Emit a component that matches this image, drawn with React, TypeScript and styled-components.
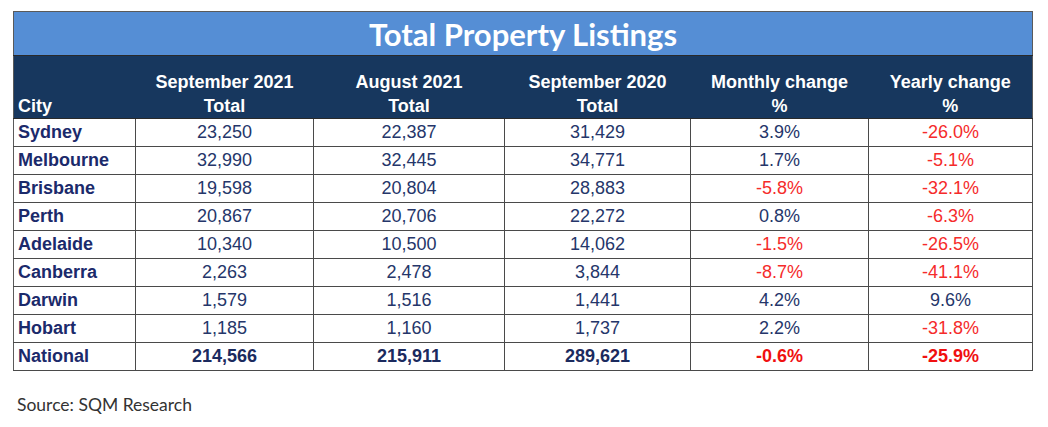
import React from "react";
import styled, { createGlobalStyle } from "styled-components";

const GlobalStyle = createGlobalStyle`
  body {
    margin: 0;
    background: #ffffff;
    font-family: "Liberation Sans", Arial, sans-serif;
  }
`;

const Page = styled.div`
  display: flex;
  flex-direction: column;
  align-items: flex-start;
  padding: 11px 0 0 13px;
  width: 1048px;
  height: 427px;
  box-sizing: border-box;
`;

const Table = styled.table`
  width: 1019px;
  border-collapse: collapse;
  table-layout: fixed;
  border: 1px solid #5a5a5a;
`;

const TitleCell = styled.th`
  height: 43px;
  padding: 0;
  background: #558ed5;
  color: #ffffff;
  font-family: Lato, "Open Sans", sans-serif;
  font-weight: 700;
  font-size: 31px;
  line-height: 40px;
  text-align: center;
  vertical-align: middle;
  border-bottom: 1px solid #2a2a2a;
`;

const HeadCell = styled.th<{ $left?: boolean }>`
  height: 62px;
  padding: 0 0 0 ${({ $left }) => ($left ? "4px" : "0")};
  background: #17375e;
  color: #ffffff;
  font-size: 18px;
  font-weight: 700;
  line-height: 24px;
  text-align: ${({ $left }) => ($left ? "left" : "center")};
  vertical-align: bottom;
  border-bottom: 1px solid #2a2a2a;
`;

const Row = styled.tr`
  height: 28px;
`;

const CityCell = styled.td`
  padding: 0 0 0 4px;
  color: #1b2a6b;
  font-size: 18px;
  font-weight: 700;
  border: 1px solid #4a4a4a;
  border-left: 1px solid #5a5a5a;
`;

const NumCell = styled.td<{ $neg?: boolean; $bold?: boolean }>`
  padding: 0;
  text-align: center;
  font-size: 18px;
  font-weight: ${({ $bold }) => ($bold ? 700 : 400)};
  color: ${({ $neg, $bold }) =>
    $neg ? ($bold ? "#f01010" : "#f52b2b") : $bold ? "#1b2a5e" : "#25366a"};
  border: 1px solid #4a4a4a;
`;

const Source = styled.div`
  margin: 23px 0 0 4px;
  font-family: Lato, "Open Sans", sans-serif;
  font-size: 17.5px;
  color: #333333;
`;

type Listing = {
  city: string;
  sep21: string;
  aug21: string;
  sep20: string;
  monthly: string;
  yearly: string;
};

const rows: Listing[] = [
  { city: "Sydney", sep21: "23,250", aug21: "22,387", sep20: "31,429", monthly: "3.9%", yearly: "-26.0%" },
  { city: "Melbourne", sep21: "32,990", aug21: "32,445", sep20: "34,771", monthly: "1.7%", yearly: "-5.1%" },
  { city: "Brisbane", sep21: "19,598", aug21: "20,804", sep20: "28,883", monthly: "-5.8%", yearly: "-32.1%" },
  { city: "Perth", sep21: "20,867", aug21: "20,706", sep20: "22,272", monthly: "0.8%", yearly: "-6.3%" },
  { city: "Adelaide", sep21: "10,340", aug21: "10,500", sep20: "14,062", monthly: "-1.5%", yearly: "-26.5%" },
  { city: "Canberra", sep21: "2,263", aug21: "2,478", sep20: "3,844", monthly: "-8.7%", yearly: "-41.1%" },
  { city: "Darwin", sep21: "1,579", aug21: "1,516", sep20: "1,441", monthly: "4.2%", yearly: "9.6%" },
  { city: "Hobart", sep21: "1,185", aug21: "1,160", sep20: "1,737", monthly: "2.2%", yearly: "-31.8%" },
];

const national: Listing = {
  city: "National",
  sep21: "214,566",
  aug21: "215,911",
  sep20: "289,621",
  monthly: "-0.6%",
  yearly: "-25.9%",
};

const isNeg = (v: string) => v.startsWith("-");

function ListingRow({ row, bold }: { row: Listing; bold?: boolean }) {
  return (
    <Row>
      <CityCell>{row.city}</CityCell>
      <NumCell $bold={bold}>{row.sep21}</NumCell>
      <NumCell $bold={bold}>{row.aug21}</NumCell>
      <NumCell $bold={bold}>{row.sep20}</NumCell>
      <NumCell $bold={bold} $neg={isNeg(row.monthly)}>
        {row.monthly}
      </NumCell>
      <NumCell $bold={bold} $neg={isNeg(row.yearly)}>
        {row.yearly}
      </NumCell>
    </Row>
  );
}

export default function App() {
  return (
    <>
      <GlobalStyle />
      <Page>
        <Table>
          <colgroup>
            <col style={{ width: 122 }} />
            <col style={{ width: 178 }} />
            <col style={{ width: 191 }} />
            <col style={{ width: 186 }} />
            <col style={{ width: 178 }} />
            <col style={{ width: 164 }} />
          </colgroup>
          <thead>
            <tr>
              <TitleCell colSpan={6}>Total Property Listings</TitleCell>
            </tr>
            <tr>
              <HeadCell $left>City</HeadCell>
              <HeadCell>
                September 2021
                <br />
                Total
              </HeadCell>
              <HeadCell>
                August 2021
                <br />
                Total
              </HeadCell>
              <HeadCell>
                September 2020
                <br />
                Total
              </HeadCell>
              <HeadCell>
                Monthly change
                <br />%
              </HeadCell>
              <HeadCell>
                Yearly change
                <br />%
              </HeadCell>
            </tr>
          </thead>
          <tbody>
            {rows.map((r) => (
              <ListingRow key={r.city} row={r} />
            ))}
            <ListingRow row={national} bold />
          </tbody>
        </Table>
        <Source>Source: SQM Research</Source>
      </Page>
    </>
  );
}
